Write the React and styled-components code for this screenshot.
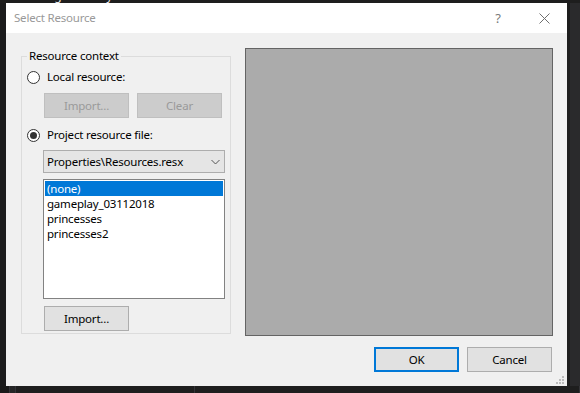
import React from "react";
import styled, { createGlobalStyle } from "styled-components";

const FONT = `"Noto Sans", "Open Sans", "Liberation Sans", sans-serif`;

const Global = createGlobalStyle`
  html, body { margin: 0; padding: 0; background: #1e1e1e; }
  body { font-family: ${FONT}; }
  * { box-sizing: border-box; }
`;

const Desktop = styled.div`
  width: 580px;
  height: 393px;
  overflow: hidden;
  background: #1e1e1e;
  display: flex;
  flex-direction: column;
`;

const TopStrip = styled.div`
  height: 3px;
  flex: none;
  overflow: hidden;
  padding-left: 24px;
  color: #e8e8e8;
  font: 12px/12px ${FONT};
  white-space: pre;
`;

const TopText = styled.span`
  display: block;
  margin-top: -10px;
  word-spacing: 16px;
`;

const MiddleRow = styled.div`
  display: flex;
  height: 383px;
  flex: none;
`;

const LeftGutter = styled.div`
  width: 6px;
  flex: none;
  background: #1b1b1c;
`;

const RightGutter = styled.div`
  flex: 1;
  background: #2a2a2c;
  border-left: 3px solid #1e1e1e;
`;

const BottomStrip = styled.div`
  flex: 1;
  background: #1e1e1e;
  display: flex;
`;

const BottomPane = styled.div`
  width: ${(p) => p.$w}px;
  flex: none;
  border-right: 1px solid #333337;
  background: ${(p) => p.$bg || "transparent"};
`;

const Dialog = styled.div`
  width: 561px;
  height: 383px;
  flex: none;
  position: relative;
  display: flex;
  flex-direction: column;
  background: #f0f0f0;
  font: 11.5px/16px ${FONT};
  letter-spacing: -0.2px;
  color: #000;
`;

const TitleBar = styled.div`
  height: 30px;
  flex: none;
  display: flex;
  align-items: center;
  background: #fff;
  padding-left: 8px;
`;

const Title = styled.div`
  flex: 1;
  color: #999;
`;

const CaptionButton = styled.div`
  width: 46px;
  height: 30px;
  display: flex;
  align-items: center;
  justify-content: center;
  color: #7a7a7a;
  font-size: 13px;
`;

const Body = styled.div`
  flex: 1;
  display: flex;
  flex-direction: column;
  padding: 15px 14px 0 15px;
`;

const MainRow = styled.div`
  display: flex;
  gap: 14px;
  align-items: flex-start;
  height: 288px;
`;

const GroupBox = styled.fieldset`
  width: 210px;
  height: 286px;
  margin: 0;
  padding: 0 0 0 5px;
  border: 1px solid #dcdcdc;
  display: flex;
  flex-direction: column;
  align-items: flex-start;
  min-width: 0;
`;

const Legend = styled.legend`
  padding: 0 2px;
  margin-left: 0;
  line-height: 16px;
`;

const RadioRow = styled.label`
  display: flex;
  align-items: center;
  gap: 7px;
  height: 16px;
  margin-top: ${(p) => p.$mt}px;
`;

const RadioCircle = styled.span`
  width: 13px;
  height: 13px;
  border-radius: 50%;
  border: 1px solid #333;
  background: #fff;
  display: flex;
  align-items: center;
  justify-content: center;
  &::after {
    content: "";
    width: 7px;
    height: 7px;
    border-radius: 50%;
    background: #333;
    display: ${(p) => (p.$checked ? "block" : "none")};
  }
`;

const ButtonGroup = styled.div`
  display: flex;
  gap: 8px;
  margin-top: ${(p) => p.$mt || 0}px;
  margin-left: ${(p) => p.$ml || 0}px;
`;

const Button = styled.div`
  width: 85px;
  height: 25px;
  display: flex;
  align-items: center;
  justify-content: center;
  margin-top: ${(p) => p.$mt || 0}px;
  margin-left: ${(p) => p.$ml || 0}px;
  background: ${(p) => (p.$disabled ? "#cccccc" : "#e1e1e1")};
  color: ${(p) => (p.$disabled ? "#9a9a9a" : "#000")};
  border: ${(p) =>
    p.$primary ? "2px solid #0078d7" : p.$disabled ? "1px solid #bfbfbf" : "1px solid #adadad"};
`;

const Combo = styled.div`
  width: 182px;
  height: 23px;
  margin-top: 7px;
  margin-left: 16px;
  display: flex;
  align-items: center;
  justify-content: space-between;
  padding: 0 4px 0 3px;
  background: #e5e5e5;
  border: 1px solid #adadad;
`;

const ListBox = styled.div`
  width: 182px;
  height: 120px;
  margin-top: 6px;
  margin-left: 16px;
  padding: 1px;
  background: #fff;
  border: 1px solid #828282;
`;

const ListItem = styled.div`
  height: 15px;
  line-height: 15px;
  padding-left: 2px;
  overflow: hidden;
  background: ${(p) => (p.$selected ? "#0078d7" : "transparent")};
  color: ${(p) => (p.$selected ? "#fff" : "#000")};
  white-space: nowrap;
`;

const Preview = styled.div`
  flex: 1;
  height: 288px;
  background: #ababab;
  border: 1px solid #646464;
`;

const ButtonRow = styled.div`
  display: flex;
  justify-content: flex-end;
  gap: 8px;
  margin-top: 11px;
  padding-right: 1px;
`;

const Grip = styled.svg`
  position: absolute;
  right: 3px;
  bottom: 2px;
`;

const Radio = ({ checked, label, mt }) => (
  <RadioRow $mt={mt}>
    <RadioCircle $checked={checked} />
    <span>{label}</span>
  </RadioRow>
);

const items = ["(none)", "gameplay_03112018", "princesses", "princesses2"];

export default function App() {
  return (
    <>
      <Global />
      <Desktop>
        <TopStrip>
          <TopText>Debug  System  Window  Event  Button</TopText>
        </TopStrip>
        <MiddleRow>
          <LeftGutter />
          <Dialog>
            <TitleBar>
              <Title>Select Resource</Title>
              <CaptionButton>?</CaptionButton>
              <CaptionButton>
                <svg width="11" height="11" viewBox="0 0 11 11">
                  <path d="M0.5 0.5 L10.5 10.5 M10.5 0.5 L0.5 10.5" stroke="#6f6f6f" strokeWidth="1" fill="none" />
                </svg>
              </CaptionButton>
            </TitleBar>
            <Body>
              <MainRow>
                <GroupBox>
                  <Legend>Resource context</Legend>
                  <Radio mt={5} label="Local resource:" />
                  <ButtonGroup $mt={8} $ml={17}>
                    <Button $disabled>Import...</Button>
                    <Button $disabled>Clear</Button>
                  </ButtonGroup>
                  <Radio mt={9} checked label="Project resource file:" />
                  <Combo>
                    <span>Properties\Resources.resx</span>
                    <svg width="9" height="6" viewBox="0 0 9 6">
                      <path d="M0.5 1 L4.5 5 L8.5 1" stroke="#555" strokeWidth="1" fill="none" />
                    </svg>
                  </Combo>
                  <ListBox>
                    {items.map((it, i) => (
                      <ListItem key={it} $selected={i === 0}>
                        {it}
                      </ListItem>
                    ))}
                  </ListBox>
                  <Button $mt={7} $ml={17}>Import...</Button>
                </GroupBox>
                <Preview />
              </MainRow>
              <ButtonRow>
                <Button $primary>OK</Button>
                <Button>Cancel</Button>
              </ButtonRow>
            </Body>
            <Grip width="8" height="8" viewBox="0 0 8 8">
              <g fill="#bcbcbc">
                <rect x="6" y="0" width="2" height="2" />
                <rect x="3" y="3" width="2" height="2" />
                <rect x="6" y="3" width="2" height="2" />
                <rect x="0" y="6" width="2" height="2" />
                <rect x="3" y="6" width="2" height="2" />
                <rect x="6" y="6" width="2" height="2" />
              </g>
            </Grip>
          </Dialog>
          <RightGutter />
        </MiddleRow>
        <BottomStrip>
          <BottomPane $w={10} $bg="#1a1a1a" />
          <BottomPane $w={6} $bg="#252526" />
          <BottomPane $w={179} />
          <BottomPane $w={385} />
        </BottomStrip>
      </Desktop>
    </>
  );
}
